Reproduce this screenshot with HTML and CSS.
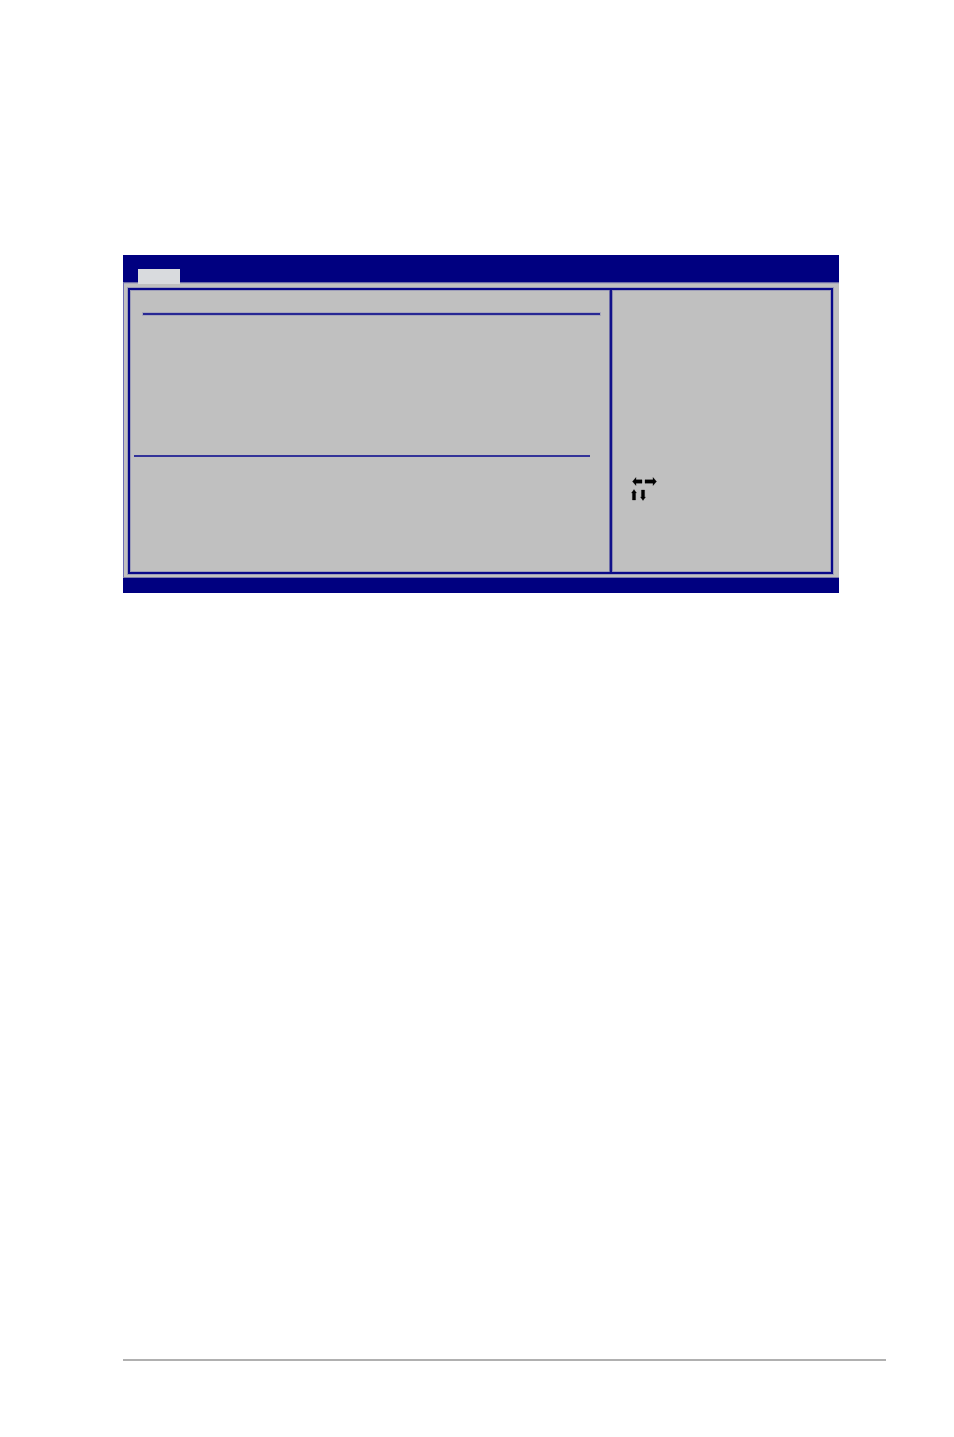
FILE: index.html
```html
<!DOCTYPE html>
<html lang="en">
<head>
<meta charset="utf-8">
<title>BIOS setup</title>
<link rel="stylesheet" href="styles.css">
</head>
<body>
<main class="bios">
  <header class="bios-header"><div class="tab"></div></header>
  <div class="bios-body">
    <div class="frame">
      <section class="settings">
        <div class="rule-soft"></div>
        <div class="rule-flat"></div>
      </section>
      <aside class="help">
        <svg class="keys" width="28" height="28" viewBox="0 0 28 28" aria-hidden="true">
          <path d="M1.5 6.5 5 2.5V4.800h6v3.400H5v2.300Z"/>
          <path d="M25.500 6.500 22 2.500V4.800h-8v3.400h8v2.300Z"/>
          <path d="M3 14.500 5.500 18H4.600v7h-3.200v-7H.5Z"/>
          <path d="M12 25.500 9.500 22h.900v-7h3.200v7h.900Z"/>
        </svg>
      </aside>
    </div>
  </div>
  <footer class="bios-footer"></footer>
</main>
<hr class="page-rule">
</body>
</html>
```
FILE: styles.css
```css
* {
  box-sizing: border-box;
}

body {
  margin: 0;
  min-height: 100vh;
  padding: 255px 68px 76px 123px;
  display: flex;
  flex-direction: column;
  justify-content: space-between;
  background: #fff;
  font-family: "Liberation Sans", sans-serif;
}

.bios {
  margin-right: 47px;
  background: #c0c0c0;
}

.bios-header {
  display: flex;
  height: 28px;
  padding: 14px 15px 0;
  background: #000080;
  border-bottom: 1px solid #6c6ca8;
  box-shadow: 0 1px 0 #acacc0;
}

.tab {
  position: relative;
  width: 42px;
  height: 15px;
  background: #d9dbde;
}

.bios-body {
  padding: 5px 6px 4px 4px;
  border-left: 1px solid #6c6cb4;
}

.frame {
  display: flex;
  min-height: 286px;
  border: 2px solid #08088a;
  box-shadow: 0 0 0 1px #9c9cb8, inset 0 0 0 1px #9c9cb8;
}

.settings {
  flex: 1;
  padding: 23px 10px 0 4px;
}

.rule-soft {
  height: 2px;
  margin-left: 9px;
  background: #282894;
  box-shadow: 0 0 0 1px #a8a8bc;
}

.rule-flat {
  height: 2px;
  margin: 140px 10px 0 0;
  background: #333399;
}

.help {
  width: 221px;
  padding: 185px 19px 0;
  border-left: 2px solid #10108a;
  box-shadow: -1px 0 0 #6c6ca8, inset 1px 0 0 #8c8cb0;
}

.keys {
  display: block;
  fill: #000;
  stroke: #000;
  stroke-opacity: 0.3;
  stroke-width: 1;
}

.bios-footer {
  height: 15px;
  background: #000080;
  box-shadow: 0 -1px 0 #7c7cac;
}

.page-rule {
  width: 100%;
  height: 2px;
  margin: 0;
  border: 0;
  background: #b0b0b0;
}
```
